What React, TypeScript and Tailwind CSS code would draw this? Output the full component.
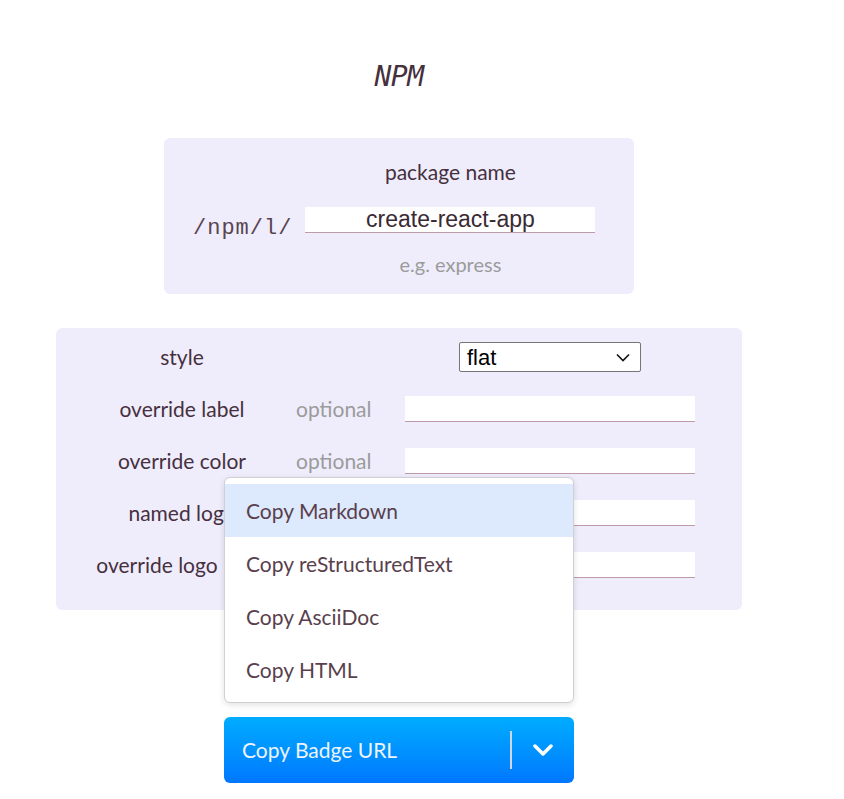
import React from "react";

const lato = { fontFamily: "Lato, 'Noto Sans', sans-serif" };

function Field({ value = "" }: { value?: string }) {
  return (
    <input
      readOnly
      value={value}
      className="h-[26px] w-[290px] border-0 border-b border-b-[#bf9aa9] bg-white text-center text-[23px] leading-[26px] text-[#3a2a33] outline-none"
      style={{ fontFamily: "'Liberation Sans', Arial, sans-serif" }}
    />
  );
}

function Row({
  label,
  optional = true,
  labelClass = "",
}: {
  label: string;
  optional?: boolean;
  labelClass?: string;
}) {
  return (
    <div className="flex h-[52px] items-center">
      <div className={`ml-[12px] w-[228px] whitespace-nowrap text-center text-[21px] text-[#46303e] ${labelClass}`}>{label}</div>
      <div className="w-[109px] text-[21px] text-[#9b9b9b]">{optional ? "optional" : ""}</div>
      <Field />
    </div>
  );
}

export default function App() {
  return (
    <div className="min-h-[799px] w-[844px] bg-white" style={lato}>
      <div className="flex w-[798px] flex-col items-center">
        <h1
          className="mt-[59px] text-[28px] italic leading-[36px] text-[#46303e]"
          style={{ fontFamily: "'DejaVu Sans Mono', monospace", letterSpacing: "-0.5px" }}
        >
          NPM
        </h1>

        <div className="mt-[43px] flex h-[156px] w-[470px] items-center rounded-[6px] bg-[#efedfc]">
          <div
            className="ml-[29px] mr-[13px] pt-[24px] text-[22px] text-[#5a4450]"
            style={{ fontFamily: "'Liberation Mono', monospace", letterSpacing: "1px" }}
          >
            /npm/l/
          </div>
          <div className="flex flex-col items-center pt-[4px]">
            <div className="text-[21px] leading-[26px] text-[#46303e]">package name</div>
            <div className="mt-[22px]">
              <Field value="create-react-app" />
            </div>
            <div className="mt-[18px] text-[20px] leading-[26px] text-[#9b9b9b]">e.g. express</div>
          </div>
        </div>

        <div className="mt-[34px] w-[686px] rounded-[6px] bg-[#efedfc] pb-[19px] pt-[3px]">
          <div className="flex h-[52px] items-center">
            <div className="ml-[12px] w-[228px] text-center text-[21px] text-[#46303e]">style</div>
            <div className="w-[109px]" />
            <div className="flex w-[290px] justify-center">
              <div
                className="flex h-[30px] w-[182px] items-center justify-between rounded-[2px] border border-[#767676] bg-white pl-[7px] pr-[10px] text-[22px] text-black"
                style={{ fontFamily: "'Liberation Sans', Arial, sans-serif" }}
              >
                <span>flat</span>
                <svg width="14" height="9" viewBox="0 0 14 9" fill="none">
                  <path d="M1 1.5 L7 7.5 L13 1.5" stroke="#111" strokeWidth="1.6" />
                </svg>
              </div>
            </div>
          </div>
          <Row label="override label" />
          <Row label="override color" />
          <Row label="named logo" />
          <Row label="override logo" labelClass="pr-[50px]" />
        </div>

        <div className="relative mt-[107px]">
          <div className="absolute bottom-[calc(100%+14px)] left-0 w-[350px] rounded-[6px] border border-[#cfcfd4] bg-white py-[6px] shadow-[0_2px_6px_rgba(0,0,0,0.12)]">
            {["Copy Markdown", "Copy reStructuredText", "Copy AsciiDoc", "Copy HTML"].map((t, i) => (
              <div
                key={t}
                className={`flex h-[53px] items-center pl-[21px] text-[21px] text-[#5a3f4d] ${
                  i === 0 ? "bg-[#dde9fc]" : ""
                }`}
              >
                {t}
              </div>
            ))}
          </div>
          <div className="flex h-[66px] w-[350px] items-center rounded-[6px] bg-gradient-to-b from-[#00acff] to-[#0077ff]">
            <span className="ml-[18px] text-[21px] text-[#eef4fb]">Copy Badge URL</span>
            <div className="ml-auto h-[38px] w-[2px] bg-[#cfd6dc]" />
            <div className="flex w-[62px] justify-center">
              <svg width="20" height="12" viewBox="0 0 20 12" fill="none">
                <path d="M2 2 L10 10 L18 2" stroke="white" strokeWidth="3.5" strokeLinecap="round" strokeLinejoin="round" />
              </svg>
            </div>
          </div>
        </div>
      </div>
    </div>
  );
}
